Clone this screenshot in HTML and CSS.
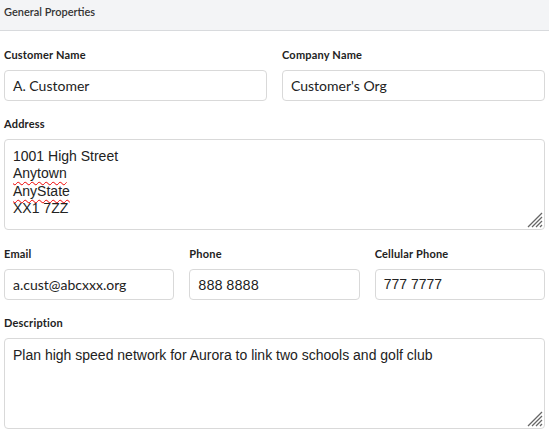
FILE: index.html
```html
<!DOCTYPE html>
<html>
<head>
<meta charset="utf-8">
<link rel="stylesheet" href="styles.css">
</head>
<body>
<div class="panel">
  <div class="header">General Properties</div>
  <div class="form">
    <div class="row two">
      <div class="field">
        <div class="label">Customer Name</div>
        <div class="input lato">A. Customer</div>
      </div>
      <div class="field">
        <div class="label">Company Name</div>
        <div class="input lato">Customer's Org</div>
      </div>
    </div>
    <div class="row tall">
      <div class="field">
        <div class="label">Address</div>
        <div class="textarea">1001 High Street<br><span class="spell">Anytown</span><br><span class="spell">AnyState</span><br>XX1 7ZZ<svg class="grip" width="17" height="17" viewBox="0 0 17 17"><path d="M16 2L2 16M16 6L6 16M16 10L10 16M16 14L14 16" stroke="#666" stroke-width="1.3" fill="none"/></svg></div>
      </div>
    </div>
    <div class="row three">
      <div class="field">
        <div class="label">Email</div>
        <div class="input lato">a.cust@abcxxx.org</div>
      </div>
      <div class="field">
        <div class="label">Phone</div>
        <div class="input lato">888 8888</div>
      </div>
      <div class="field">
        <div class="label">Cellular Phone</div>
        <div class="input arial">777 7777</div>
      </div>
    </div>
    <div class="row">
      <div class="field">
        <div class="label">Description</div>
        <div class="textarea">Plan high speed network for Aurora to link two schools and golf club<svg class="grip" width="17" height="17" viewBox="0 0 17 17"><path d="M16 2L2 16M16 6L6 16M16 10L10 16M16 14L14 16" stroke="#666" stroke-width="1.3" fill="none"/></svg></div>
      </div>
    </div>
  </div>
</div>
</body>
</html>
```
FILE: styles.css
```css
* { box-sizing: border-box; }
html, body { margin: 0; padding: 0; background: #fff; }
body { font-family: Lato, "Liberation Sans", sans-serif; color: #333; }
.panel { width: 549px; }
.header {
  height: 31px;
  background: #f3f4f6;
  border-bottom: 1px solid #d8dadd;
  font-size: 11px;
  line-height: 24px;
  padding-left: 4px;
  color: #333;
  font-weight: 600;
}
.form { padding: 16px 4px 0 4px; }
.row { display: grid; grid-template-columns: 1fr; column-gap: 15px; margin-bottom: 15px; }
.row.tall { margin-bottom: 16px; }
.row.two { grid-template-columns: 1fr 1fr; }
.row.three { grid-template-columns: 1fr 1fr 1fr; }
.label {
  font-size: 11px;
  font-weight: 700;
  line-height: 16px;
  margin-bottom: 7px;
  color: #222;
  letter-spacing: 0.2px;
}
.input {
  height: 31px;
  border: 1px solid #d9d9d9;
  border-radius: 4px;
  padding: 0 8px;
  font-size: 14px;
  line-height: 29px;
  color: #222;
}
.lato { font-family: Lato, sans-serif; }
.arial { font-family: "Liberation Sans", Arial, sans-serif; }
.textarea {
  position: relative;
  height: 91px;
  border: 1px solid #d9d9d9;
  border-radius: 4px;
  padding: 8px 8px;
  font-family: "Liberation Sans", Arial, sans-serif;
  font-size: 14px;
  line-height: 17.3px;
  color: #222;
}
.spell { text-decoration: underline wavy #e00; text-decoration-thickness: 1px; text-underline-offset: 3px; }
.grip { position: absolute; right: 1px; bottom: 1px; }
```
